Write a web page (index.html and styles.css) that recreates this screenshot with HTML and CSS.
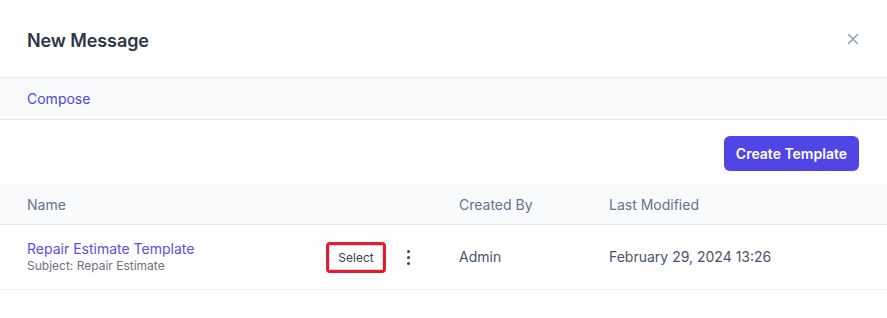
FILE: index.html
```html
<!DOCTYPE html>
<html lang="en">
<head>
<meta charset="utf-8">
<title>New Message</title>
<link rel="stylesheet" href="styles.css">
</head>
<body>
<div class="modal">
  <div class="modal-header">
    <h2 class="modal-title">New Message</h2>
    <button class="close-btn" aria-label="Close">
      <svg width="12" height="12" viewBox="0 0 12 12"><path d="M1.5 1.5 L10.5 10.5 M10.5 1.5 L1.5 10.5" stroke="#94a3b8" stroke-width="1.6" stroke-linecap="round" fill="none"/></svg>
    </button>
  </div>
  <div class="tabs">
    <a class="tab-link">Compose</a>
  </div>
  <div class="toolbar">
    <button class="btn-primary">Create Template</button>
  </div>
  <div class="table">
    <div class="thead">
      <div class="cell c-name">Name</div>
      <div class="cell c-by">Created By</div>
      <div class="cell c-mod">Last Modified</div>
    </div>
    <div class="trow">
      <div class="cell c-name name-cell">
        <div class="name-text">
          <a class="tpl-link">Repair Estimate Template</a>
          <span class="tpl-sub">Subject: Repair Estimate</span>
        </div>
        <div class="actions">
          <span class="highlight"><button class="btn-select">Select</button></span>
          <span class="kebab"><i></i><i></i><i></i></span>
        </div>
      </div>
      <div class="cell c-by">Admin</div>
      <div class="cell c-mod">February 29, 2024 13:26</div>
    </div>
  </div>
</div>
</body>
</html>
```
FILE: styles.css
```css
* { box-sizing: border-box; }
html, body { margin: 0; padding: 0; background: #ffffff; }
body {
  font-family: Inter, "Liberation Sans", Arial, sans-serif;
  color: #374151;
}
.modal { width: 887px; height: 318px; background: #fff; }
.modal-header {
  height: 78px;
  display: flex;
  align-items: center;
  justify-content: space-between;
  padding: 3px 27px 0 27px;
  border-bottom: 1px solid #e2e8f0;
}
.modal-title {
  margin: 0;
  font-size: 18px;
  font-weight: 600;
  color: #2d3748;
  letter-spacing: -0.1px;
}
.close-btn {
  border: 0;
  background: none;
  padding: 0;
  width: 12px;
  height: 12px;
  display: flex;
  margin-right: 1px;
  margin-top: -3px;
}
.tabs {
  height: 42px;
  background: #f8fafc;
  border-bottom: 1px solid #e2e8f0;
  display: flex;
  align-items: center;
  padding: 0 27px;
}
.tab-link {
  font-size: 14px;
  color: #5145e5;
}
.toolbar {
  display: flex;
  justify-content: flex-end;
  padding: 16px 28px 13px;
}
.btn-primary {
  height: 35px;
  padding: 0 12px;
  border: 0;
  border-radius: 6px;
  background: #4f46e5;
  color: #fff;
  font-family: inherit;
  font-size: 14px;
  font-weight: 600;
}
.thead, .trow {
  display: grid;
  grid-template-columns: 459px 150px 1fr;
  border-bottom: 1px solid #e5e7eb;
}
.thead {
  height: 41px;
  background: #f8fafc;
  align-items: center;
  font-size: 14px;
  color: #64748b;
}
.trow {
  height: 65px;
  align-items: center;
  padding-bottom: 2px;
  font-size: 14px;
  color: #475569;
  border-bottom-color: #eef0f3;
}
.cell.c-name { padding-left: 27px; }
.name-cell {
  display: flex;
  align-items: center;
  justify-content: space-between;
  padding-right: 45px;
}
.name-text { display: flex; flex-direction: column; }
.tpl-link { font-size: 14px; color: #5b50e8; line-height: 18px; padding-top: 1px; }
.tpl-sub { font-size: 12px; color: #6b7280; line-height: 16px; }
.actions { display: flex; align-items: center; gap: 16px; padding-top: 3px; }
.highlight {
  display: inline-flex;
  border: 3px solid #e11d2e;
  border-radius: 4px;
  padding: 0;
}
.btn-select {
  width: 54px;
  height: 25px;
  border: 1px solid #d1d5db;
  border-radius: 2px;
  background: #fff;
  font-family: inherit;
  font-size: 12px;
  color: #374151;
  padding: 0;
}
.kebab {
  width: 12px;
  display: inline-flex;
  flex-direction: column;
  align-items: center;
  gap: 3px;
}
.kebab i {
  display: block;
  width: 3px;
  height: 3px;
  border-radius: 50%;
  background: #374151;
}
```
